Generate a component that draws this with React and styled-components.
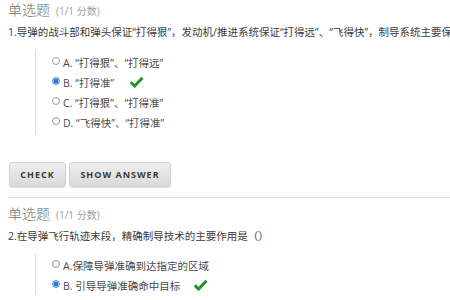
import React from "react";
import styled, { createGlobalStyle } from "styled-components";

const Global = createGlobalStyle`
  html, body { margin: 0; padding: 0; background: #fff; }
  body {
    width: 450px; height: 300px; overflow: hidden;
    font-family: "Open Sans", "Noto Sans CJK SC", sans-serif;
  }
`;

const Page = styled.div`
  padding-left: 8px;
`;

const Problem = styled.section`
  display: flex;
  flex-direction: column;
`;

const Heading = styled.h3`
  margin: 0;
  height: 20px;
  line-height: 20px;
  font-size: 14px;
  font-weight: 300;
  color: #707070;
  white-space: nowrap;
`;

const Score = styled.span`
  font-size: 10px;
  color: #a0a0a0;
  margin-left: 6px;
  font-weight: 400;
`;

const Question = styled.p`
  margin: 4px 0 0 0;
  height: 16px;
  line-height: 16px;
  font-size: 10.5px;
  color: #3c3c3c;
  white-space: nowrap;
  overflow: hidden;
`;

const Options = styled.div`
  margin: ${(p) => p.$top}px 0 0 27px;
  border-left: 1px solid #dcdcdc;
  padding: 2px 0 ${(p) => p.$bottom}px 16px;
  display: flex;
  flex-direction: column;
`;

const Row = styled.label`
  display: flex;
  align-items: center;
  height: 20px;
  font-size: 10.5px;
  color: #4a4a4a;
  white-space: nowrap;
`;

const Radio = styled.span`
  box-sizing: border-box;
  width: 8px;
  height: 8px;
  border-radius: 50%;
  margin-right: 3px;
  flex: none;
  border: 1px solid ${(p) => (p.$checked ? "#4a8ad8" : "#9a9a9a")};
  background: ${(p) =>
    p.$checked
      ? "radial-gradient(circle, #2f78d6 0 2.2px, #bcd6f5 2.6px)"
      : "#fff"};
  position: relative;
  top: -1px;
`;

const Check = styled.svg`
  margin-left: ${(p) => p.$gap}px;
  width: 15px;
  height: 12px;
  flex: none;
`;

const Buttons = styled.div`
  display: flex;
  gap: 3px;
  margin: 27px 0 0 1px;
`;

const Button = styled.button`
  box-sizing: border-box;
  height: 25px;
  width: ${(p) => p.$w}px;
  padding: 0;
  border: 1px solid #d2d0d0;
  border-radius: 3px;
  background: linear-gradient(#efeded, #dbd9d9);
  box-shadow: 0 1px 1px rgba(0, 0, 0, 0.12);
  font-family: "Open Sans", sans-serif;
  font-weight: 700;
  font-size: 9px;
  letter-spacing: 1px;
  color: #3a3a3a;
  text-transform: uppercase;
`;

const Divider = styled.hr`
  margin: 10px 0 6px 0;
  border: 0;
  border-top: 1px solid #e3e3e3;
  height: 0;
`;

const Mark = ({ gap }) => (
  <Check $gap={gap} viewBox="0 0 15 12">
    <polyline
      points="1.8,6.2 5.6,10 13.5,1.8"
      fill="none"
      stroke="#23912e"
      strokeWidth="3"
      strokeLinecap="butt"
      strokeLinejoin="miter"
    />
  </Check>
);

const Option = ({ checked, text, mark, gap }) => (
  <Row>
    <Radio $checked={checked} />
    <span>{text}</span>
    {mark && <Mark gap={gap} />}
  </Row>
);

export default function App() {
  return (
    <>
      <Global />
      <Page>
        <Problem>
          <Heading>
            单选题<Score>(1/1 分数)</Score>
          </Heading>
          <Question>
            1.导弹的战斗部和弹头保证“打得狠”，发动机/推进系统保证“打得远”、“飞得快”，制导系统主要保证“打得准”
          </Question>
          <Options $top={10} $bottom={3}>
            <Option text="A. “打得狠”、“打得远”" />
            <Option checked text="B. “打得准”" mark gap={15} />
            <Option text="C. “打得狠”、“打得准”" />
            <Option text="D. “飞得快”、“打得准”" />
          </Options>
          <Buttons>
            <Button $w={57}>Check</Button>
            <Button $w={102}>Show Answer</Button>
          </Buttons>
        </Problem>
        <Divider />
        <Problem>
          <Heading>
            单选题<Score>(1/1 分数)</Score>
          </Heading>
          <Question>2.在导弹飞行轨迹末段，精确制导技术的主要作用是（）</Question>
          <Options $top={9} $bottom={0}>
            <Option text="A.保障导弹准确到达指定的区域" />
            <Option checked text="B. 引导导弹准确命中目标" mark gap={13} />
          </Options>
        </Problem>
      </Page>
    </>
  );
}
